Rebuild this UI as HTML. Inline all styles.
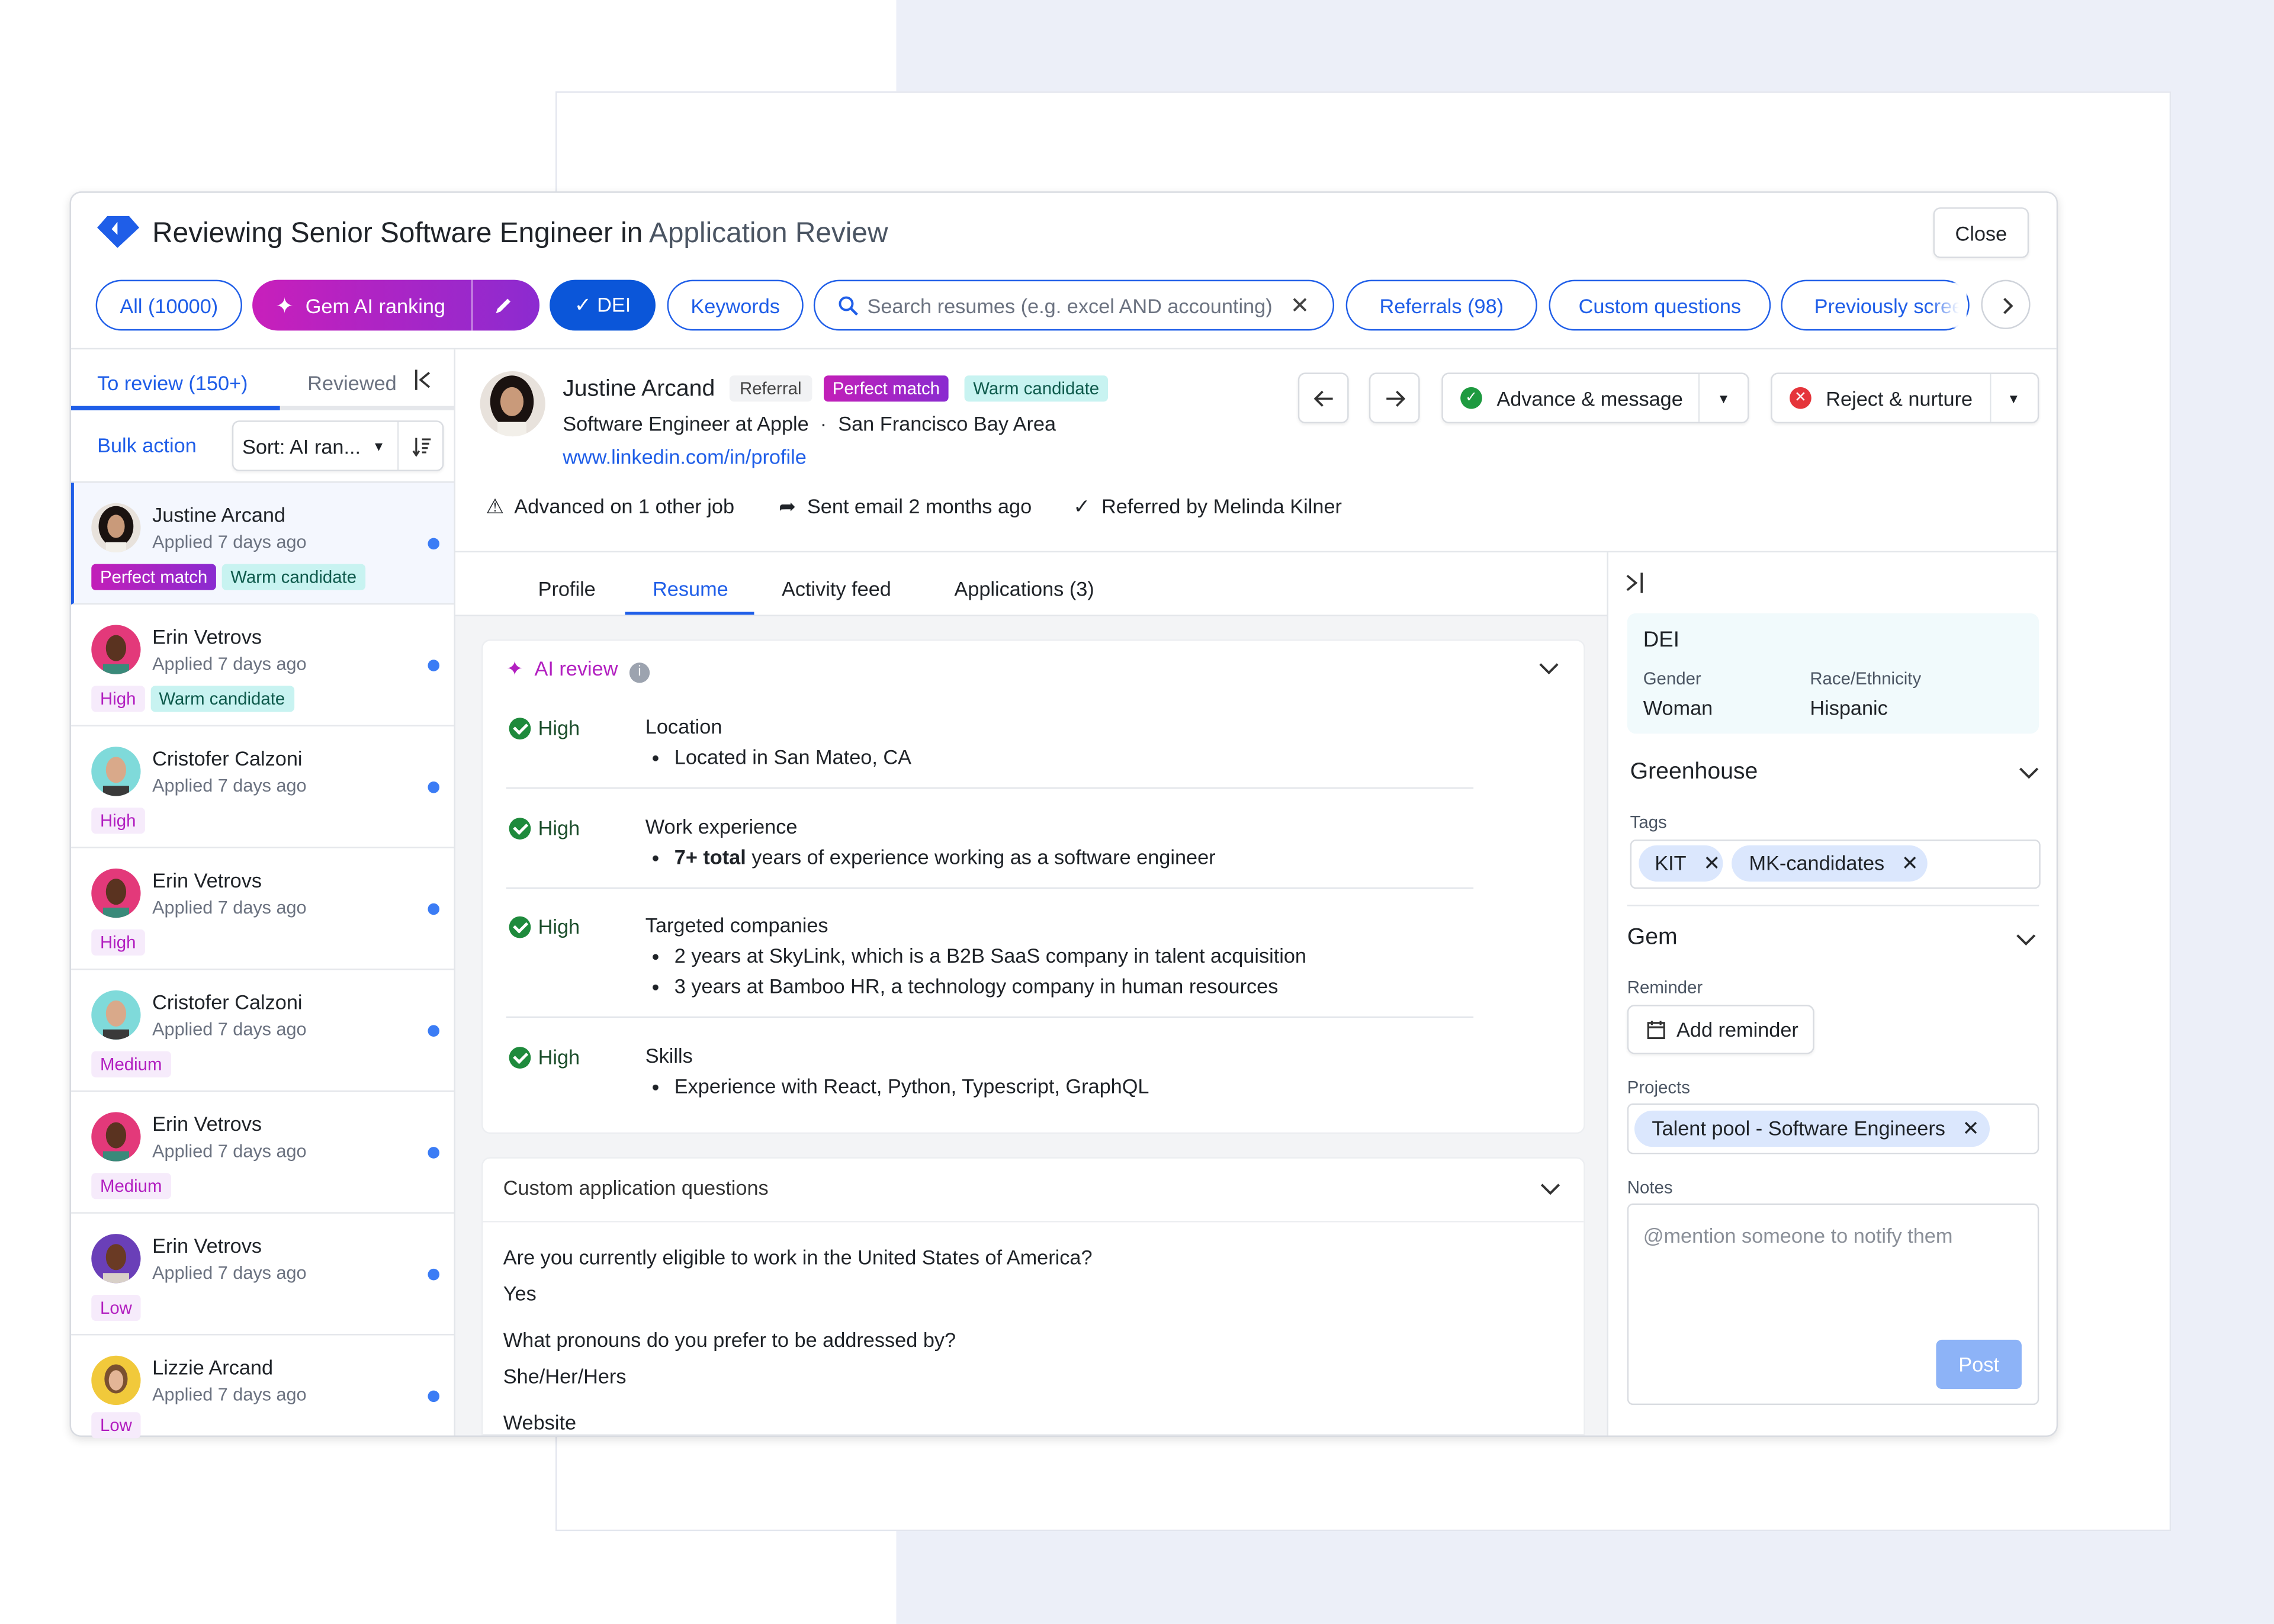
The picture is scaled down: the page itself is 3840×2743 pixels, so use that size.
<!DOCTYPE html>
<html><head><meta charset="utf-8"><style>
*{box-sizing:border-box;margin:0;padding:0}
html,body{width:3840px;height:2742px;overflow:hidden;background:#fff}
#s{position:absolute;left:0;top:0;width:1568px;height:1120px;transform:scale(2.44898);transform-origin:0 0;font-family:"Liberation Sans",sans-serif;color:#1f2328;font-size:14px}
.a{position:absolute}
.pill{position:absolute;top:193px;height:35px;border:1.5px solid #1f5ee8;border-radius:18px;color:#1f5ee8;font-size:14px;display:flex;align-items:center;justify-content:center;white-space:nowrap;background:#fff}
.tag{display:inline-block;font-size:12px;padding:2px 6px;border-radius:3px;line-height:14px}
.pm{background:linear-gradient(90deg,#c21fb8,#8a2bd0);color:#fff}
.wc{background:#c8f3f1;color:#0e5a4c}
.lv{background:#f6ebfb;color:#b21fc0}
.row{position:absolute;left:49px;width:264px;height:84px;border-bottom:1px solid #e5e7eb}
.row .av{position:absolute;left:14px;top:14px;width:34px;height:34px;border-radius:50%;overflow:hidden}
.row .n{position:absolute;left:56px;top:14px;font-size:14px}
.row .d{position:absolute;left:56px;top:34px;font-size:12.5px;color:#6b7280}
.row .dot{position:absolute;left:246px;top:38px;width:8px;height:8px;border-radius:50%;background:#3b7cf5}
.row .t{position:absolute;left:14px;top:56px}
.btn{position:absolute;height:35px;border:1px solid #d9dce1;border-radius:5px;background:#fff;display:flex;align-items:center;font-size:14px;box-shadow:0 1px 2px rgba(0,0,0,.06)}
.hi{position:absolute;left:351px;font-size:14px;color:#1a4d2a;display:flex;align-items:center;gap:5px}
.ck{width:15px;height:15px;border-radius:50%;background:#1e8a3c;display:inline-block;position:relative}
.ck:after{content:"";position:absolute;left:4.5px;top:2.5px;width:4px;height:7px;border:solid #fff;border-width:0 2px 2px 0;transform:rotate(45deg)}
.sec{position:absolute;left:445px;font-size:14px;line-height:21px}
.sec ul{margin-left:20px}
.hr{position:absolute;left:349px;width:667px;height:1px;background:#e2e5ea}
.lbl{position:absolute;font-size:12px;color:#4b5563}
</style></head><body><div id="s">
<div class="a" style="left:618px;top:0;width:950px;height:1120px;background:#eceff8"></div>
<div class="a" style="left:383px;top:63px;width:1114px;height:993px;background:#fff;border:1px solid #e3e6ee"></div>

<div class="a" style="left:48px;top:132px;width:1371px;height:859px;background:#fff;border:1px solid #d8dbe1;border-radius:8px;box-shadow:0 2px 6px rgba(0,0,0,.12);overflow:hidden">
</div>

<svg class="a" style="left:66px;top:148px" width="31" height="24" viewBox="0 0 31 24"><path d="M8 1h15l7 8-15 14L1 9z" fill="#1f5ee8"/><path d="M15 5l-4 5 4 4z" fill="#fff"/></svg>
<div class="a" style="left:105px;top:150px;font-size:19.5px">Reviewing Senior Software Engineer in <span style="color:#4b5563">Application Review</span></div>
<div class="btn" style="left:1333px;top:143px;width:66px;justify-content:center">Close</div>

<div class="pill" style="left:66px;width:101px">All (10000)</div>
<div class="pill" style="left:174px;width:198px;border:none;background:linear-gradient(90deg,#c81fbb,#8c2bd0);color:#fff;justify-content:flex-start;padding-left:16px"><span style="font-size:15px;margin-right:8px">✦</span>Gem AI ranking<span style="position:absolute;left:151px;top:0;width:1px;height:35px;background:rgba(255,255,255,.5)"></span><svg style="position:absolute;left:166px" width="14" height="14" viewBox="0 0 14 14"><path d="M2 12l1-3 7-7 2 2-7 7z" fill="#fff"/></svg></div>
<div class="pill" style="left:379px;width:73px;background:#0b56d9;border-color:#0b56d9;color:#fff">✓&nbsp;DEI</div>
<div class="pill" style="left:460px;width:94px">Keywords</div>
<div class="pill" style="left:561px;width:359px;justify-content:flex-start;padding-left:16px;color:#6b7280"><svg width="14" height="14" viewBox="0 0 14 14" style="margin-right:6px"><circle cx="5.5" cy="5.5" r="4.3" fill="none" stroke="#1f5ee8" stroke-width="1.6"/><path d="M8.7 8.7L13 13" stroke="#1f5ee8" stroke-width="1.8"/></svg>Search resumes (e.g. excel AND accounting)<span style="position:absolute;right:16px;color:#444;font-size:16px">✕</span></div>
<div class="pill" style="left:928px;width:132px">Referrals (98)</div>
<div class="pill" style="left:1068px;width:153px">Custom questions</div>
<div class="pill" style="left:1228px;width:130px;justify-content:flex-start;padding-left:22px;overflow:hidden">Previously scree</div>
<div class="a" style="left:1330px;top:195px;width:26px;height:31px;background:linear-gradient(90deg,rgba(255,255,255,0),#fff 80%)"></div>
<div class="a" style="left:1366px;top:193px;width:34px;height:34px;border:1px solid #cfd3da;border-radius:50%;background:#fff"><svg style="position:absolute;left:11px;top:10px" width="12" height="14"><path d="M4 2l5 5-5 5" fill="none" stroke="#333" stroke-width="1.6"/></svg></div>

<div class="a" style="left:49px;top:240px;width:1369px;height:1px;background:#e3e6ea"></div>

<div class="a" style="left:313px;top:241px;width:1px;height:749px;background:#e3e6ea"></div>
<div class="a" style="left:67px;top:256px;color:#1f5ee8">To review (150+)</div>
<div class="a" style="left:212px;top:256px;color:#6b7280">Reviewed</div>
<svg class="a" style="left:285px;top:254px" width="14" height="16"><path d="M2 1v14M11 3l-6 5 6 5" fill="none" stroke="#333" stroke-width="1.5"/></svg>
<div class="a" style="left:49px;top:280px;width:264px;height:3px;background:#e5e7eb"></div>
<div class="a" style="left:49px;top:280px;width:144px;height:3px;background:#1f5ee8"></div>
<div class="a" style="left:67px;top:299px;color:#1f5ee8">Bulk action</div>
<div class="btn" style="left:160px;top:290px;width:146px;padding-left:6px">Sort: AI ran...<span style="margin-left:8px;font-size:9px">▼</span><span style="position:absolute;left:113px;top:0;width:1px;height:33px;background:#e3e6ea"></span><svg style="position:absolute;left:123px" width="14" height="14"><path d="M3 1v11M1 10l2 3 2-3M7 2h6M7 5h5M7 8h4M7 11h3" fill="none" stroke="#333" stroke-width="1.3"/></svg></div>
<div class="a" style="left:49px;top:332px;width:264px;height:1px;background:#e3e6ea"></div>

<div class="row" style="top:333px;background:#f4f7fe;border-left:2px solid #1f5ee8">
<div class="av" style="left:12px;background:#e8e2dc"><svg width="34" height="34"><ellipse cx="17" cy="16" rx="12" ry="14" fill="#1a1210"/><ellipse cx="17" cy="16" rx="6" ry="8" fill="#c99a7a"/><rect x="10" y="27" width="14" height="8" fill="#f2efe9"/></svg></div>
<div class="n" style="left:54px">Justine Arcand</div><div class="d" style="left:54px">Applied 7 days ago</div><div class="dot" style="left:244px"></div>
<div class="t" style="left:12px"><span class="tag pm">Perfect match</span> <span class="tag wc">Warm candidate</span></div></div>

<div class="row" style="top:417px"><div class="av" style="background:#e3397a"><svg width="34" height="34"><ellipse cx="17" cy="16" rx="7" ry="9" fill="#5a3320"/><rect x="8" y="27" width="18" height="8" fill="#3a8a7a"/></svg></div>
<div class="n">Erin Vetrovs</div><div class="d">Applied 7 days ago</div><div class="dot"></div>
<div class="t"><span class="tag lv">High</span> <span class="tag wc">Warm candidate</span></div></div>

<div class="row" style="top:501px"><div class="av" style="background:#7fdada"><svg width="34" height="34"><ellipse cx="17" cy="16" rx="7" ry="9" fill="#d9a98a"/><rect x="8" y="27" width="18" height="8" fill="#3a3a3a"/></svg></div>
<div class="n">Cristofer Calzoni</div><div class="d">Applied 7 days ago</div><div class="dot"></div>
<div class="t"><span class="tag lv">High</span></div></div>

<div class="row" style="top:585px"><div class="av" style="background:#e3397a"><svg width="34" height="34"><ellipse cx="17" cy="16" rx="7" ry="9" fill="#5a3320"/><rect x="8" y="27" width="18" height="8" fill="#3a8a7a"/></svg></div>
<div class="n">Erin Vetrovs</div><div class="d">Applied 7 days ago</div><div class="dot"></div>
<div class="t"><span class="tag lv">High</span></div></div>

<div class="row" style="top:669px"><div class="av" style="background:#7fdada"><svg width="34" height="34"><ellipse cx="17" cy="16" rx="7" ry="9" fill="#d9a98a"/><rect x="8" y="27" width="18" height="8" fill="#3a3a3a"/></svg></div>
<div class="n">Cristofer Calzoni</div><div class="d">Applied 7 days ago</div><div class="dot"></div>
<div class="t"><span class="tag lv">Medium</span></div></div>

<div class="row" style="top:753px"><div class="av" style="background:#e3397a"><svg width="34" height="34"><ellipse cx="17" cy="16" rx="7" ry="9" fill="#5a3320"/><rect x="8" y="27" width="18" height="8" fill="#3a8a7a"/></svg></div>
<div class="n">Erin Vetrovs</div><div class="d">Applied 7 days ago</div><div class="dot"></div>
<div class="t"><span class="tag lv">Medium</span></div></div>

<div class="row" style="top:837px"><div class="av" style="background:#6a3fb8"><svg width="34" height="34"><ellipse cx="17" cy="16" rx="7" ry="9" fill="#6a3a24"/><rect x="8" y="27" width="18" height="8" fill="#d8d0c8"/></svg></div>
<div class="n">Erin Vetrovs</div><div class="d">Applied 7 days ago</div><div class="dot"></div>
<div class="t"><span class="tag lv">Low</span></div></div>

<div class="row" style="top:921px;height:69px;border:none"><div class="av" style="background:#f1c93b"><svg width="34" height="34"><ellipse cx="17" cy="16" rx="8" ry="10" fill="#7a5030"/><ellipse cx="17" cy="17" rx="5" ry="7" fill="#e3b596"/></svg></div>
<div class="n">Lizzie Arcand</div><div class="d">Applied 7 days ago</div><div class="dot"></div>
<div class="t" style="top:53px"><span class="tag lv">Low</span></div></div>

<div class="a" style="left:331px;top:256px;width:45px;height:45px;border-radius:50%;overflow:hidden;background:#e8e2dc"><svg width="45" height="45"><ellipse cx="22" cy="21" rx="15" ry="18" fill="#1a1210"/><ellipse cx="22" cy="21" rx="8" ry="10" fill="#c99a7a"/><rect x="12" y="35" width="20" height="10" fill="#f2efe9"/></svg></div>
<div class="a" style="left:388px;top:260px;font-size:16px">Justine Arcand</div>
<div class="a" style="left:503px;top:259px;background:#f1f2f4;color:#444;font-size:12px;padding:2px 7px;border-radius:3px">Referral</div>
<div class="a tag pm" style="left:568px;top:259px;padding:2px 6px">Perfect match</div>
<div class="a tag wc" style="left:665px;top:259px;padding:2px 6px">Warm candidate</div>
<div class="a" style="left:388px;top:284px">Software Engineer at Apple &nbsp;·&nbsp; San Francisco Bay Area</div>
<div class="a" style="left:388px;top:307px;color:#1f5ee8">www.linkedin.com/in/profile</div>
<div class="btn" style="left:895px;top:257px;width:35px;justify-content:center"><svg width="14" height="12"><path d="M13 6H2M6 1L1 6l5 5" fill="none" stroke="#333" stroke-width="1.5"/></svg></div>
<div class="btn" style="left:944px;top:257px;width:35px;justify-content:center"><svg width="14" height="12"><path d="M1 6h11M8 1l5 5-5 5" fill="none" stroke="#333" stroke-width="1.5"/></svg></div>
<div class="btn" style="left:994px;top:257px;width:212px;padding-left:12px"><span style="width:15px;height:15px;border-radius:50%;background:#1e9a40;color:#fff;font-size:10px;text-align:center;line-height:15px;margin-right:10px">✓</span>Advance &amp; message<span style="position:absolute;left:176px;top:0;width:1px;height:33px;background:#e3e6ea"></span><span style="position:absolute;left:189px;font-size:9px">▼</span></div>
<div class="btn" style="left:1221px;top:257px;width:185px;padding-left:12px"><span style="width:15px;height:15px;border-radius:50%;background:#e5353b;color:#fff;font-size:10px;text-align:center;line-height:15px;margin-right:10px">✕</span>Reject &amp; nurture<span style="position:absolute;left:150px;top:0;width:1px;height:33px;background:#e3e6ea"></span><span style="position:absolute;left:162px;font-size:9px">▼</span></div>
<div class="a" style="left:335px;top:341px">⚠&nbsp; Advanced on 1 other job</div>
<div class="a" style="left:537px;top:341px">➦&nbsp; Sent email 2 months ago</div>
<div class="a" style="left:740px;top:341px">✓&nbsp; Referred by Melinda Kilner</div>

<div class="a" style="left:314px;top:380px;width:1104px;height:1px;background:#e3e6ea"></div>
<div class="a" style="left:314px;top:381px;width:794px;height:609px;background:#f3f4f6"></div>
<div class="a" style="left:314px;top:381px;width:794px;height:44px;background:#fff;border-bottom:1px solid #e3e6ea"></div>
<div class="a" style="left:371px;top:398px">Profile</div>
<div class="a" style="left:450px;top:398px;color:#1f5ee8">Resume</div>
<div class="a" style="left:431px;top:422px;width:89px;height:2px;background:#1f5ee8"></div>
<div class="a" style="left:539px;top:398px">Activity feed</div>
<div class="a" style="left:658px;top:398px">Applications (3)</div>

<div class="a" style="left:332px;top:441px;width:761px;height:341px;background:#fff;border-radius:6px;border:1px solid #eceef1"></div>
<div class="a" style="left:349px;top:453px;color:#b21fc0">✦&nbsp;&nbsp;AI review <span style="display:inline-block;width:14px;height:14px;border-radius:50%;background:#9ca3af;color:#fff;font-size:10px;text-align:center;line-height:14px;margin-left:4px">i</span></div>
<svg class="a" style="left:1061px;top:456px" width="14" height="10"><path d="M1 2l6 6 6-6" fill="none" stroke="#333" stroke-width="1.6"/></svg>
<div class="hi" style="top:494px"><span class="ck"></span>High</div>
<div class="sec" style="top:491px">Location<ul><li>Located in San Mateo, CA</li></ul></div>
<div class="hr" style="top:543px"></div>
<div class="hi" style="top:563px"><span class="ck"></span>High</div>
<div class="sec" style="top:560px">Work experience<ul><li><b>7+ total</b> years of experience working as a software engineer</li></ul></div>
<div class="hr" style="top:612px"></div>
<div class="hi" style="top:631px"><span class="ck"></span>High</div>
<div class="sec" style="top:628px">Targeted companies<ul><li>2 years at SkyLink, which is a B2B SaaS company in talent acquisition</li><li>3 years at Bamboo HR, a technology company in human resources</li></ul></div>
<div class="hr" style="top:701px"></div>
<div class="hi" style="top:721px"><span class="ck"></span>High</div>
<div class="sec" style="top:718px">Skills<ul><li>Experience with React, Python, Typescript, GraphQL</li></ul></div>

<div class="a" style="left:332px;top:798px;width:761px;height:192px;background:#fff;border-radius:6px 6px 0 0;border:1px solid #eceef1"></div>
<div class="a" style="left:347px;top:811px;color:#333">Custom application questions</div>
<svg class="a" style="left:1062px;top:815px" width="14" height="10"><path d="M1 2l6 6 6-6" fill="none" stroke="#333" stroke-width="1.6"/></svg>
<div class="a" style="left:333px;top:842px;width:759px;height:1px;background:#eceef1"></div>
<div class="a" style="left:347px;top:859px">Are you currently eligible to work in the United States of America?</div>
<div class="a" style="left:347px;top:884px">Yes</div>
<div class="a" style="left:347px;top:916px">What pronouns do you prefer to be addressed by?</div>
<div class="a" style="left:347px;top:941px">She/Her/Hers</div>
<div class="a" style="left:347px;top:973px">Website</div>

<div class="a" style="left:1108px;top:381px;width:1px;height:609px;background:#e3e6ea"></div>
<svg class="a" style="left:1120px;top:394px" width="14" height="16"><path d="M2 3l6 5-6 5M12 1v14" fill="none" stroke="#333" stroke-width="1.5"/></svg>
<div class="a" style="left:1122px;top:423px;width:284px;height:83px;background:#f1fafc;border-radius:6px"></div>
<div class="a" style="left:1133px;top:433px;font-size:15px">DEI</div>
<div class="lbl" style="left:1133px;top:461px">Gender</div>
<div class="lbl" style="left:1248px;top:461px">Race/Ethnicity</div>
<div class="a" style="left:1133px;top:480px">Woman</div>
<div class="a" style="left:1248px;top:480px">Hispanic</div>
<div class="a" style="left:1124px;top:524px;font-size:16px">Greenhouse</div>
<svg class="a" style="left:1392px;top:528px" width="14" height="10"><path d="M1 2l6 6 6-6" fill="none" stroke="#333" stroke-width="1.6"/></svg>
<div class="lbl" style="left:1124px;top:560px">Tags</div>
<div class="a" style="left:1124px;top:579px;width:283px;height:34px;border:1px solid #d9dce1;border-radius:4px"></div>
<div class="a" style="left:1130px;top:583px;height:25px;width:58px;background:#dbe7fd;border-radius:13px;padding:4px 0 0 11px">KIT&nbsp;&nbsp; ✕</div>
<div class="a" style="left:1194px;top:583px;height:25px;width:135px;background:#dbe7fd;border-radius:13px;padding:4px 0 0 12px">MK-candidates&nbsp;&nbsp; ✕</div>
<div class="a" style="left:1122px;top:624px;width:284px;height:1px;background:#e3e6ea"></div>
<div class="a" style="left:1122px;top:638px;font-size:16px">Gem</div>
<svg class="a" style="left:1390px;top:643px" width="14" height="10"><path d="M1 2l6 6 6-6" fill="none" stroke="#333" stroke-width="1.6"/></svg>
<div class="lbl" style="left:1122px;top:674px">Reminder</div>
<div class="btn" style="left:1122px;top:693px;width:129px;height:34px;padding-left:12px"><svg width="14" height="14" style="margin-right:7px"><rect x="1.5" y="2.5" width="11" height="10.5" fill="none" stroke="#333" stroke-width="1.3"/><path d="M1.5 5.5h11M4 1v3M10 1v3" stroke="#333" stroke-width="1.3"/></svg>Add reminder</div>
<div class="lbl" style="left:1122px;top:743px">Projects</div>
<div class="a" style="left:1122px;top:761px;width:284px;height:35px;border:1px solid #d9dce1;border-radius:4px"></div>
<div class="a" style="left:1127px;top:766px;height:25px;width:245px;background:#dbe7fd;border-radius:13px;padding:4px 0 0 12px">Talent pool - Software Engineers&nbsp;&nbsp; ✕</div>
<div class="lbl" style="left:1122px;top:812px">Notes</div>
<div class="a" style="left:1122px;top:830px;width:284px;height:139px;border:1px solid #d9dce1;border-radius:4px"></div>
<div class="a" style="left:1133px;top:844px;color:#8a8f98">@mention someone to notify them</div>
<div class="a" style="left:1335px;top:924px;width:59px;height:34px;background:#8db3f7;color:#fff;border-radius:4px;text-align:center;line-height:34px">Post</div>
</div></body></html>
